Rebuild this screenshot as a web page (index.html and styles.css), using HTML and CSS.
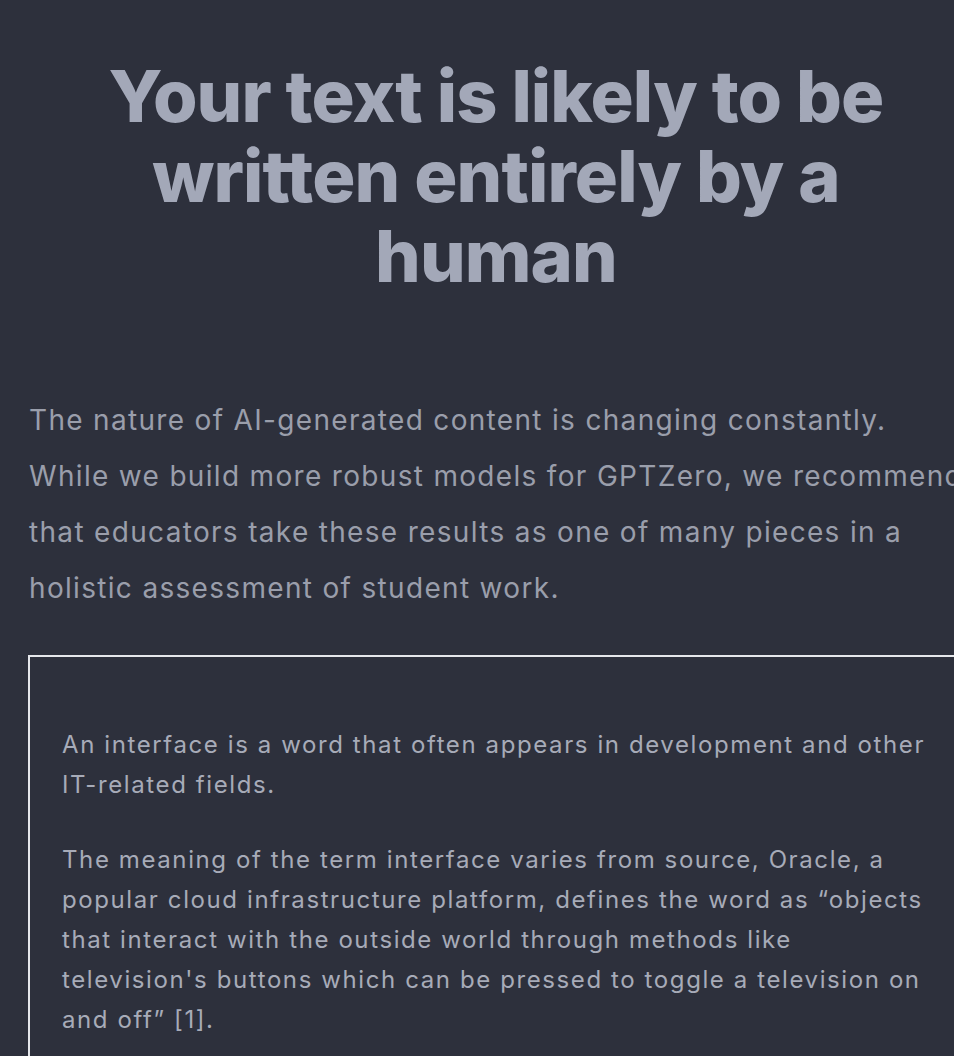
FILE: index.html
```html
<!DOCTYPE html>
<html lang="en">
<head>
<meta charset="utf-8">
<title>Result</title>
<link rel="stylesheet" href="styles.css">
</head>
<body>
<main class="result">
  <h1 class="result-title">Your text is likely to be written entirely by a human</h1>
  <p class="result-note">The nature of AI-generated content is changing constantly.<br>While we build more robust models for GPTZero, we recommend that educators take these results as one of many pieces in a holistic assessment of student work.</p>
  <section class="doc-box">
    <p>An interface is a word that often appears in development and other IT-related fields.</p>
    <p>The meaning of the term interface varies from source, Oracle, a popular cloud infrastructure platform, defines the word as “objects that interact with the outside world through methods like television's buttons which can be pressed to toggle a television on and off” [1].</p>
  </section>
</main>
</body>
</html>
```

FILE: styles.css
```css
html, body {
  margin: 0;
  padding: 0;
  overflow: hidden;
}
body {
  background: #2d303c;
  font-family: Inter, "Noto Sans", sans-serif;
  height: 1056px;
}
.result {
  width: 948px;
  padding: 56px 0 0 28px;
}
.result-title {
  width: 880px;
  margin: 0 0 0 28px;
  text-align: center;
  font-size: 72px;
  line-height: 80px;
  font-weight: 800;
  letter-spacing: -0.9px;
  color: #a3a8b8;
}
.result-note {
  margin: 96px 0 0 1px;
  width: 940px;
  font-size: 28px;
  line-height: 56px;
  letter-spacing: 1.32px;
  color: #9a9eab;
}
.doc-box {
  margin-top: 39px;
  border: 2px solid #e5e7eb;
  padding: 68px 32px 40px 32px;
  width: 866px;
}
.doc-box p {
  margin: 0 0 35px 0;
  font-size: 24px;
  line-height: 40px;
  letter-spacing: 1.6px;
  color: #a7abb8;
}
```
